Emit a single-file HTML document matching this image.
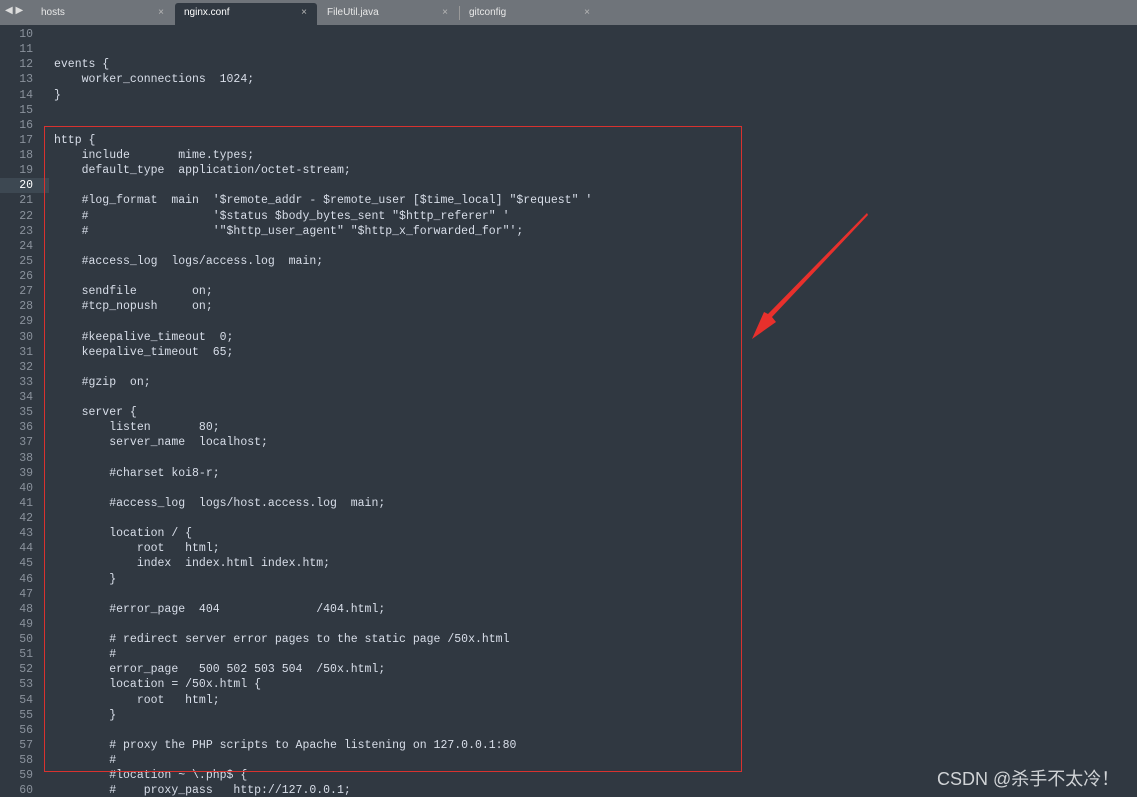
<!DOCTYPE html>
<html><head><meta charset="utf-8"><style>
html,body{margin:0;padding:0;background:#303841;width:1137px;height:797px;overflow:hidden;position:relative}
.tabs{position:absolute;left:0;top:0;width:1137px;height:25px;background:#6f747a}
.tab{position:absolute;top:3px;height:22px;font:10px "Liberation Sans",sans-serif;color:#e8e8e8;line-height:20px;box-sizing:border-box}
.tab .x{position:absolute;right:10px;top:0;color:#b8b8b8}
.act{background:#303841;border-radius:3px 3px 0 0;color:#fff}
.code{position:absolute;left:54px;top:27px;font:11.5px/15.12px "Liberation Mono",monospace;color:#d8dee9;white-space:pre}
.ln{position:absolute;left:0;top:27px;width:33px;text-align:right;font:11.5px/15.12px "Liberation Mono",monospace;color:#8a929c;white-space:pre}
.hl{position:absolute;left:0;top:178px;width:49px;height:15px;background:#3d4852}
.box{position:absolute;left:44px;top:126px;width:696px;height:644px;border:1px solid #d8322f}
.wm{position:absolute;left:937px;top:765px;font:18px "Liberation Sans","Noto Sans CJK SC",sans-serif;color:#d0d3d6;white-space:nowrap}
</style></head><body>
<div class="tabs">
<div style="position:absolute;left:5px;top:5px;font:10px sans-serif;color:#ddd">◀ ▶</div>
<div class="tab" style="left:34px;width:140px;padding-left:7px">hosts<span class="x">×</span></div>
<div class="tab act" style="left:175px;width:142px;padding-left:9px">nginx.conf<span class="x">×</span></div>
<div class="tab" style="left:318px;width:140px;padding-left:9px">FileUtil.java<span class="x">×</span></div>
<div style="position:absolute;left:459px;top:6px;width:1px;height:14px;background:#999"></div>
<div class="tab" style="left:460px;width:140px;padding-left:9px">gitconfig<span class="x">×</span></div>
</div>
<div class="hl"></div>
<div class="ln">10
11
12
13
14
15
16
17
18
19
<span style="color:#fff">20</span>
21
22
23
24
25
26
27
28
29
30
31
32
33
34
35
36
37
38
39
40
41
42
43
44
45
46
47
48
49
50
51
52
53
54
55
56
57
58
59
60</div>
<div class="code">

events {
    worker_connections  1024;
}


http {
    include       mime.types;
    default_type  application/octet-stream;

    #log_format  main  '$remote_addr - $remote_user [$time_local] "$request" '
    #                  '$status $body_bytes_sent "$http_referer" '
    #                  '"$http_user_agent" "$http_x_forwarded_for"';

    #access_log  logs/access.log  main;

    sendfile        on;
    #tcp_nopush     on;

    #keepalive_timeout  0;
    keepalive_timeout  65;

    #gzip  on;

    server {
        listen       80;
        server_name  localhost;

        #charset koi8-r;

        #access_log  logs/host.access.log  main;

        location / {
            root   html;
            index  index.html index.htm;
        }

        #error_page  404              /404.html;

        # redirect server error pages to the static page /50x.html
        #
        error_page   500 502 503 504  /50x.html;
        location = /50x.html {
            root   html;
        }

        # proxy the PHP scripts to Apache listening on 127.0.0.1:80
        #
        #location ~ \.php$ {
        #    proxy_pass   http://127.0.0.1;</div>
<div class="box"></div>
<svg style="position:absolute;left:0;top:0" width="1137" height="797">
<polygon points="867,213 868,215 772,317 776,322 752,339 764,312 768,314" fill="#e8302c"/>
</svg>
<div class="wm">CSDN @杀手不太冷！</div>
</body></html>
